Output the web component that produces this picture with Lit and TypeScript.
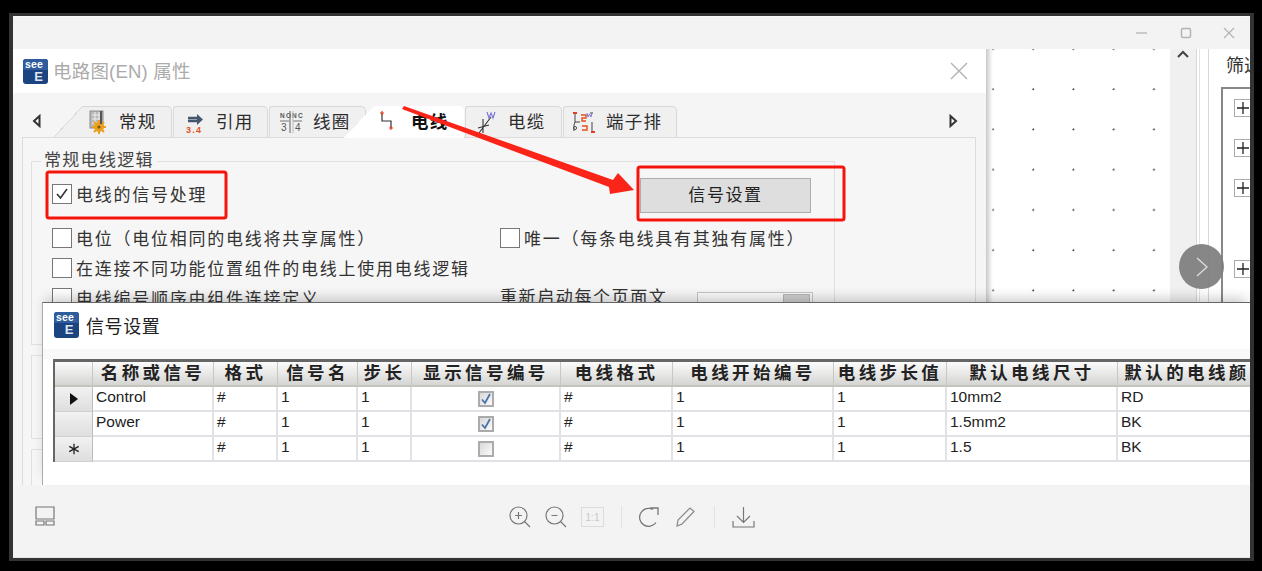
import { LitElement, html, css, svg } from "lit";
import { customElement } from "lit/decorators.js";

const tabIcons: Record<string, unknown> = {
  general: html`<svg width="20" height="24" viewBox="0 0 20 24"><rect x="2" y="1" width="13" height="17" fill="#b9b9b9" stroke="#8b8b8b"/><path d="M4 5h9M4 9h9M4 13h9M7 2v15M11 2v15" stroke="#eee"/><circle cx="11" cy="17" r="5" fill="#e9a01e"/><path d="M11 10v14M4 17h14M6 12l10 10M16 12L6 22" stroke="#e9a01e" stroke-width="2"/><circle cx="11" cy="17" r="1.6" fill="#7d5a12"/><path d="M13 1v13" stroke="#555" stroke-width="2"/></svg>`,
  ref: html`<svg width="20" height="24" viewBox="0 0 20 24"><path d="M3 8h10M3 11h10" stroke="#46566f" stroke-width="2.4"/><path d="M12 4l6 5.5-6 5.5z" fill="#46566f"/><text x="1" y="23" class="mini red">3.4</text></svg>`,
  coil: html`<svg width="22" height="24" viewBox="0 0 22 24"><text x="0" y="8" class="micro">NO</text><text x="12" y="8" class="micro">NC</text><path d="M0 11h9M13 11h9M10 1v22" stroke="#777" stroke-width="1.2"/><path d="M13 1v22" stroke="#bbb"/><text x="1" y="21" class="micro2">3</text><text x="15" y="21" class="micro2">4</text></svg>`,
  wire: html`<svg width="20" height="24" viewBox="0 0 20 24"><path d="M2 3v8h9v7" fill="none" stroke="#333" stroke-width="1.2"/><path d="M0 3h4M2 1v4M9 18h4M11 16v4" stroke="#e2401c" stroke-width="1.2"/></svg>`,
  cable: html`<svg width="20" height="24" viewBox="0 0 20 24"><path d="M2 23L14 7M6 9v14M1 18l11-3" fill="none" stroke="#333" stroke-width="1.1"/><path d="M10 2l2 6 2-5 2 5 2-6" fill="none" stroke="#7a78d8" stroke-width="1.2"/></svg>`,
  term: html`<svg width="22" height="24" viewBox="0 0 22 24"><path d="M2 3v9l-1 3v6M2 12h5M17 3l3 0M19 12v10" fill="none" stroke="#444"/><path d="M8 5h5v3H9v3h4M9 16h5v4H9" fill="none" stroke="#e2501c" stroke-width="1.4"/><path d="M0 3h4M18 22h4" stroke="#e2401c" stroke-width="2"/><path d="M14 3l1 4 1.500-3 1.500 3 1-4" fill="none" stroke="#7a78d8"/><circle cx="2" cy="18" r="1.600" fill="none" stroke="#555"/></svg>`,
};

const tabs = [
  { label: "常规", icon: "general", width: 89, pad: 5 },
  { label: "引用", icon: "ref", width: 95, pad: 11 },
  { label: "线圈", icon: "coil", width: 97, pad: 10 },
  { label: "电线", icon: "wire", width: 90, pad: 6, active: true },
  { label: "电缆", icon: "cable", width: 97, pad: 11 },
  { label: "端子排", icon: "term", width: 114, pad: 9 },
];

const cols = ["名称或信号", "格式", "信号名", "步长", "显示信号编号", "电线格式", "电线开始编号", "电线步长值", "默认电线尺寸", "默认的电线颜色"];
const rows: { mark: string; cells: string[]; on: boolean }[] = [
  { mark: "arrow", cells: ["Control", "#", "1", "1", "", "#", "1", "1", "10mm2", "RD"], on: true },
  { mark: "", cells: ["Power", "#", "1", "1", "", "#", "1", "1", "1.5mm2", "BK"], on: true },
  { mark: "new", cells: ["", "#", "1", "1", "", "#", "1", "1", "1.5", "BK"], on: false },
];

const logo = (small = false) => html`<div class="logo ${small ? "logo-small" : ""}"><span class="see">see</span><span class="e">E</span></div>`;
const check = (label: string, on = false) => html`<label class="check"><span class="box">${on ? html`<svg width="16" height="16" viewBox="0 0 16 16"><path d="M3 8l3.500 4L13 3" fill="none" stroke="#333" stroke-width="1.600"/></svg>` : ""}</span><span class="lbl">${label}</span></label>`;

@customElement("app-root")
export class AppRoot extends LitElement {
  static styles = css`
    :host { display: block; position: relative; width: 1262px; height: 571px; background: #000; overflow: hidden;
      font-family: "Liberation Sans", "Noto Sans CJK SC", sans-serif; color: #333; }
    * { box-sizing: border-box; }
    .win { position: absolute; left: 9px; top: 13px; width: 1245px; height: 548px; border: solid #333; border-width: 3px 4px 3px 4px;
      display: flex; flex-direction: column; background: #f3f3f3; }
    .titlebar { height: 33px; flex: none; display: flex; justify-content: flex-end; align-items: center; gap: 30px; padding-right: 13px; background: #f3f3f3; border-top: 1px solid #fafafa; }
    .titlebar svg { display: block; }
    .titlebar .close { margin-left: -2px; }
    .content { height: 436px; flex: none; display: flex; background: #fff; overflow: hidden; }
    .dialog { width: 973px; flex: none; display: flex; flex-direction: column; background: #f5f5f5; }
    .dlg-title { height: 44px; flex: none; background: #fff; display: flex; align-items: center; padding: 0 18px 0 10px; gap: 5px; }
    .dlg-title .name { font-size: 18.500px; color: #ababab; flex: 1; letter-spacing: .2px; padding-bottom: 3px; }
    .logo { width: 25px; height: 25px; border-radius: 3px; background: #1c4480; display: flex; flex-direction: column; flex: none; color: #fff; font-weight: 700; line-height: 1; }
    .logo .see { font-size: 10.500px; height: 11px; line-height: 10px; padding-left: 2px; letter-spacing: .2px; border-radius: 3px 3px 0 0; background: #2f5c9c; }
    .logo .e { font-size: 13px; text-align: right; padding-right: 5px; line-height: 14px; color: #dfe6ef; }
    .logo-small { height: 26px; }
    .tabbar { height: 44px; flex: none; display: flex; align-items: flex-end; position: relative; padding-left: 19px; }
    .nav { width: 14px; height: 31px; display: flex; align-items: center; flex: none; margin-bottom: 1px; }
    .tabs { display: flex; align-items: flex-end; margin-left: 37px; gap: 1px; }
    .tab { height: 31px; display: flex; align-items: center; gap: 11px; position: relative; background: #f0f0f0; border: 1px solid #d8d8d8; border-bottom: 0; border-radius: 3px 5px 0 0; font-size: 17.500px; letter-spacing: 1.200px; color: #2c2c2c; flex: none; white-space: nowrap; }
    .tab span { padding-bottom: 3px; }
    .tab.first { border-left: 0; border-top-left-radius: 0; }
    .tab.first::before { content: ""; position: absolute; left: -29px; top: -1px; bottom: 0; width: 29px; background: linear-gradient(to bottom right, transparent 49%, #d8d8d8 49%, #d8d8d8 51%, #f0f0f0 51%); }
    .tab.active { margin-left: 7px; height: 32px; margin-bottom: -1px; z-index: 2; background: #fff; border: 0; font-weight: 700; color: #111; }
    .tab.active::before { content: ""; position: absolute; left: -30px; top: 0; bottom: 0; width: 30px; background: linear-gradient(to bottom right, transparent 50%, #fff 50%); }
    .tab svg { display: block; flex: none; overflow: visible; }
    .mini { font: 700 9px "Liberation Sans", sans-serif; }
    .red { fill: #e2501c; }
    .micro { font: 700 6.500px "Liberation Sans", sans-serif; fill: #555; }
    .micro2 { font: 400 10px "Liberation Sans", sans-serif; fill: #555; }
    .nav-right { margin-left: auto; margin-right: 23px; }
    .panel { flex: 1; margin: 0 10px 0 9px; border: 1px solid #dcdcdc; border-bottom: 0; padding: 0 0 0 8px; background: #f6f6f6; min-height: 0; overflow: hidden; }
    fieldset { width: 804px; margin: 11px 0 0; padding: 0; border: 1px solid #e0e0e0; min-width: 0; height: 196px; }
    fieldset + fieldset { margin-top: 10px; height: 84px; }
    legend { font-size: 17px; letter-spacing: 1.300px; line-height: 24px; margin-left: 9px; padding: 0 3px; color: #444; }
    .form { display: grid; grid-template-columns: 448px 1fr; grid-auto-rows: 30px; padding: 5px 0 0 20px; }
    .top-left { height: 32px; display: flex; align-items: center; }
    .btn-cell { height: 35px; padding-left: 140px; }
    .btn { width: 171px; height: 35px; background: #dedede; border: 1px solid #adadad; font: inherit; font-size: 17px; letter-spacing: 1.600px; color: #222; padding: 0 0 5px; }
    .gap-row { margin-top: 15px; }
    .check { display: flex; align-items: center; gap: 4px; font-size: 17px; letter-spacing: 1.750px; white-space: nowrap; height: 30px; color: #333; }
    .lbl { padding-bottom: 2px; }
    .box { width: 20px; height: 20px; border: 1px solid #777; background: #fff; display: flex; align-items: center; justify-content: center; flex: none; }
    .restart { display: flex; align-items: flex-start; gap: 30px; font-size: 17px; letter-spacing: 1.600px; white-space: nowrap; height: 24px; }
    .spin { width: 116px; height: 26px; margin-top: 9px; border: 1px solid #c4c4c4; background: #fafafa; display: flex; justify-content: flex-end; padding: 1px 2px; flex: none; }
    .spin span { width: 27px; background: #cfcfcf; border: 1px solid #b5b5b5; }
    .canvas { width: 184px; flex: none; background-color: #fff; background-image: linear-gradient(to right, #c9c9c9, #f3f3f3 5px, transparent 7px), radial-gradient(circle at 20px 20px, #444 .8px, transparent 1.200px); background-size: 100% 100%, 40.250px 40.250px; background-position: 0 0, -13px -20px; background-repeat: no-repeat, repeat; }
    .vscroll { width: 26px; flex: none; background: #f0f0f0; display: flex; justify-content: center; }
    .split { width: 13px; flex: none; background: #fff; border-left: 1px solid #d8d8d8; display: flex; justify-content: flex-end; border-right: 1px solid #d8d8d8; }
    .split i { width: 1px; margin-right: 8px; background: #e4e4e4; }
    .side { flex: 1; min-width: 0; overflow: hidden; padding: 5px 0 0 12px; background: #fff; }
    .side-title { font-size: 18px; height: 33px; line-height: 24px; white-space: nowrap; width: 200px; color: #333; margin-left: 5px; }
    .tree { width: 60px; height: 320px; border: solid #888; border-width: 2px 0 0 2px; padding: 10px 0 0 11px; display: flex; flex-direction: column; gap: 22px; }
    .plus { width: 18px; height: 18px; flex: none; border: 1px solid #aaa; background: #fff; display: flex; align-items: center; justify-content: center; }
    .plus.far { margin-top: 41px; }
    .circle { position: absolute; left: 1166px; top: 228px; width: 45px; height: 45px; border-radius: 50%; background: rgba(125,125,125,.92); display: flex; align-items: center; justify-content: center; }
    .sub { position: absolute; left: 29px; top: 286px; width: 1208px; height: 183px; background: #fff; border-top: 1px solid #666; border-left: 1px solid #aaa; box-shadow: 0 -7px 12px -4px rgba(0,0,0,.22); display: flex; flex-direction: column; overflow: hidden; }
    .sub-title { height: 46px; flex: none; display: flex; align-items: center; gap: 7px; padding: 0 0 3px 11px; font-size: 18px; letter-spacing: .600px; color: #222; }
    .band { height: 10px; flex: none; background: #f8f8f8; }
    .table { margin-left: 10px; width: 1197px; overflow: hidden; border-left: 2px solid #666; border-top: 3px solid #666; flex: none; display: grid; grid-template-columns: 38px 121px 64px 80px 54px 149px 112px 161px 113px 171px 160px; grid-auto-rows: 25px; font-size: 15.500px; color: #222; }
    .th { height: 25px; padding-bottom: 4px; background: linear-gradient(#fbfbfb, #d5d5d3); border-right: 1px solid #c8c8c0; border-bottom: 2px solid #c4c4bc; display: flex; align-items: center; justify-content: center; font-size: 17.500px; font-weight: 700; letter-spacing: 3.400px; white-space: nowrap; overflow: hidden; color: #222; }
    .rowhead { background: linear-gradient(#f2f2f2, #dedede); border-right: 1px solid #bdbdb5; border-bottom: 1px solid #d0d0d0; display: flex; align-items: center; justify-content: center; }
    .td { border-right: 2px solid #e2e2e6; border-bottom: 2px solid #e2e2e6; padding: 0 0 3px 3px; display: flex; align-items: center; white-space: nowrap; overflow: hidden; }
    .td.center { justify-content: center; padding: 0; }
    .cb { width: 16px; height: 16px; border: 2px solid #ababab; background: linear-gradient(135deg, #d8d8d8, #fbfbfb); display: flex; align-items: center; justify-content: center; }
    .footer { flex: 1; display: flex; align-items: flex-start; padding: 21px 0 0 22px; background: #f3f3f3; border-bottom: 1px solid #e6e6e6; }
    .footer svg { display: block; flex: none; }
    .tools { display: flex; align-items: center; margin-left: 454px; gap: 14px; }
    .one { width: 23px; height: 20px; border: 1px solid #dcdcdc; font-size: 10px; color: #c8c8c8; display: flex; align-items: center; justify-content: center; }
    .sep { width: 1px; height: 22px; background: #e2e2e2; margin: 0 3px; }
    .marks { position: absolute; left: 0; top: 0; z-index: 5; pointer-events: none; }
  `;

  render() {
    const x = (d: string, cls = "") => html`<svg class="${cls}" width="16" height="16" viewBox="0 0 16 16"><path d="${d}" fill="none" stroke="#b4b4b4" stroke-width="1.300"/></svg>`;
    return html`
      <div class="win">
        <div class="titlebar">
          ${x("M3 8h11")}
          <svg width="14" height="14" viewBox="0 0 14 14"><rect x="2.500" y="2.500" width="9" height="9" rx="1.500" fill="none" stroke="#b4b4b4" stroke-width="1.500"/></svg>
          ${x("M3 3l10 10M13 3L3 13", "close")}
        </div>
        <div class="content">
          <div class="dialog">
            <div class="dlg-title">
              ${logo()}
              <span class="name">电路图(EN) 属性</span>
              <svg width="18" height="18" viewBox="0 0 18 18"><path d="M1 1l16 16M17 1L1 17" stroke="#b2b2b2" stroke-width="1.400"/></svg>
            </div>
            <div class="tabbar">
              <div class="nav"><svg width="9" height="14" viewBox="0 0 9 14"><path d="M7.500 2L2 7l5.500 5z" fill="#fff" stroke="#333" stroke-width="2"/></svg></div>
              <div class="tabs">
                ${tabs.map((t, i) => html`<div class="tab ${i === 0 ? "first" : ""} ${t.active ? "active" : ""}" style="width:${t.width}px;padding-left:${t.pad}px">${tabIcons[t.icon]}<span>${t.label}</span></div>`)}
              </div>
              <div class="nav nav-right"><svg width="9" height="14" viewBox="0 0 9 14"><path d="M1.500 2L7 7l-5.500 5z" fill="#fff" stroke="#333" stroke-width="2"/></svg></div>
            </div>
            <div class="panel">
              <fieldset>
                <legend>常规电线逻辑</legend>
                <div class="form">
                  <div class="top-left">${check("电线的信号处理", true)}</div>
                  <div class="btn-cell"><button class="btn">信号设置</button></div>
                  <div class="gap-row">${check("电位（电位相同的电线将共享属性）")}</div>
                  <div class="gap-row">${check("唯一（每条电线具有其独有属性）")}</div>
                  <div class="gap-row">${check("在连接不同功能位置组件的电线上使用电线逻辑")}</div>
                  <div class="gap-row"></div>
                  <div class="gap-row">${check("电线编号顺序由组件连接定义")}</div>
                  <div class="gap-row restart"><span>重新启动每个页面文</span><div class="spin"><span></span></div></div>
                </div>
              </fieldset>
              <fieldset></fieldset>
              <fieldset></fieldset>
            </div>
          </div>
          <div class="canvas"></div>
          <div class="vscroll"><svg width="14" height="10" viewBox="0 0 14 10"><path d="M2 8l5-5 5 5" fill="none" stroke="#444" stroke-width="2"/></svg></div>
          <div class="split"><i></i></div>
          <div class="side">
            <div class="side-title">筛选器</div>
            <div class="tree">
              ${[0, 1, 2, 3].map((i) => html`<div class="plus ${i === 3 ? "far" : ""}"><svg width="14" height="14" viewBox="0 0 14 14"><path d="M1 7h12M7 1v12" stroke="#222" stroke-width="1.300"/></svg></div>`)}
            </div>
          </div>
        </div>
        <div class="footer">
          <svg width="20" height="20" viewBox="0 0 20 20"><path d="M1 1h18v12H1zM1 15h8v4H1zM11 15h8v4h-8z" fill="none" stroke="#777" stroke-width="1.200"/></svg>
          <div class="tools">
            <svg width="22" height="22" viewBox="0 0 22 22"><circle cx="9.500" cy="9.500" r="8.500" fill="none" stroke="#777" stroke-width="1.200"/><path d="M15.500 15.500L21 21M6 9.500h7M9.500 6v7" stroke="#777" stroke-width="1.200"/></svg>
            <svg width="22" height="22" viewBox="0 0 22 22"><circle cx="9.500" cy="9.500" r="8.500" fill="none" stroke="#777" stroke-width="1.200"/><path d="M15.500 15.500L21 21M6.500 9.500h6" stroke="#777" stroke-width="1.200"/></svg>
            <div class="one">1:1</div>
            <div class="sep"></div>
            <svg width="22" height="22" viewBox="0 0 22 22"><path d="M17 16.500A9 9 0 1 1 14 3.500" fill="none" stroke="#777" stroke-width="1.300"/><path d="M11 2h8v7" fill="none" stroke="#777" stroke-width="1.300"/></svg>
            <svg width="22" height="22" viewBox="0 0 22 22"><path d="M2 20l1-6L15 2l4 3.500L7 18z" fill="none" stroke="#888" stroke-width="1.200"/></svg>
            <div class="sep"></div>
            <svg width="23" height="22" viewBox="0 0 23 22"><path d="M11.500 1v15M5 10l6.500 6.500L18 10M1 15v6h21v-6" fill="none" stroke="#777" stroke-width="1.200"/></svg>
          </div>
        </div>
        <div class="circle"><svg width="14" height="22" viewBox="0 0 14 22"><path d="M2 2l10 9-10 9" fill="none" stroke="#ddd" stroke-width="1.300"/></svg></div>
        <div class="sub">
          <div class="sub-title">${logo(true)}<span>信号设置</span></div>
          <div class="band"></div>
          <div class="table">
            <div class="th"></div>
            ${cols.map((c) => html`<div class="th">${c}</div>`)}
            ${rows.map((r) => html`
              <div class="rowhead">
                ${r.mark === "arrow" ? html`<svg width="10" height="14" viewBox="0 0 10 14"><path d="M1 1l8 6-8 6z" fill="#111"/></svg>` : ""}
                ${r.mark === "new" ? html`<svg width="12" height="12" viewBox="0 0 14 14"><path d="M7 1v12M1.500 4l11 6M12.500 4l-11 6" stroke="#222" stroke-width="1.500"/></svg>` : ""}
              </div>
              ${r.cells.map((c, i) => i === 4
                ? html`<div class="td center"><div class="cb">${r.on ? html`<svg width="12" height="12" viewBox="0 0 12 12"><path d="M2 6.500l3 3.500 5-9" fill="none" stroke="#4a72ab" stroke-width="1.800"/></svg>` : ""}</div></div>`
                : html`<div class="td">${c}</div>`)}
            `)}
          </div>
        </div>
      </div>
      <svg class="marks" width="1262" height="571" viewBox="0 0 1262 571">
        ${svg`<rect x="47" y="172" width="179" height="46" rx="2" fill="none" stroke="#f5140c" stroke-width="3"/>
        <rect x="638" y="167" width="206" height="53" rx="2" fill="none" stroke="#f5140c" stroke-width="3"/>
        <polygon points="404,106 613,180 618,173 634,190 610,194 609,187 402,109" fill="#fb2418"/>`}
      </svg>
    `;
  }
}
